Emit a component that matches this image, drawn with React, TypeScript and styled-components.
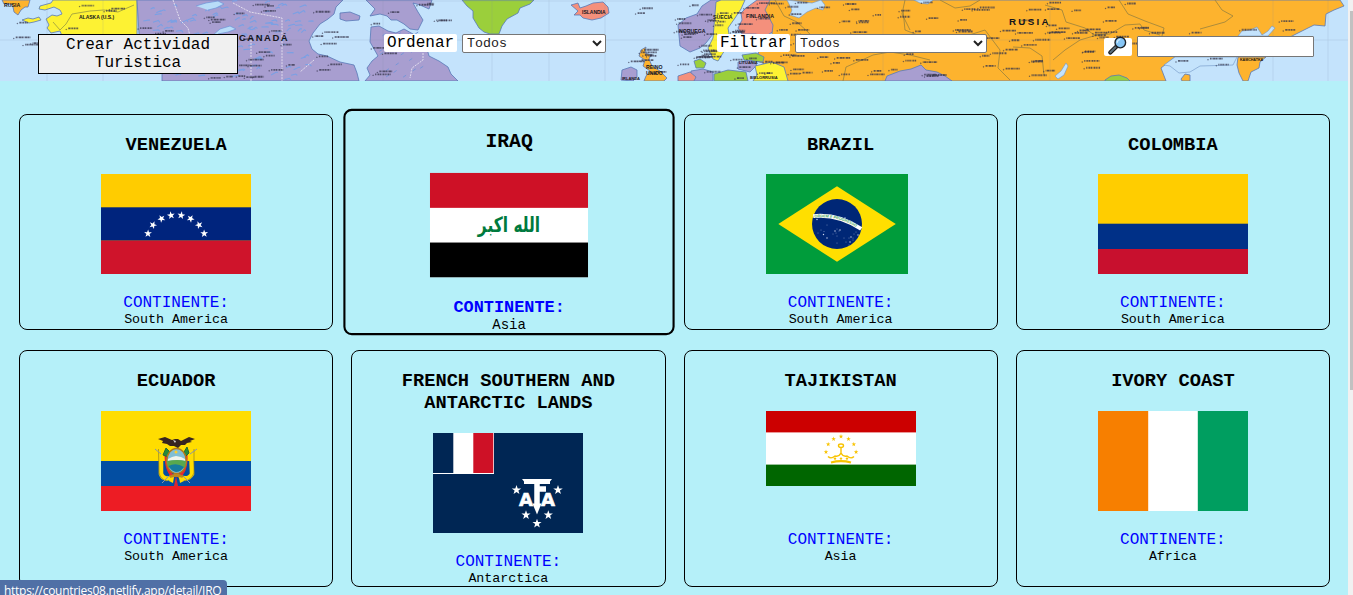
import React from 'react';
import styled, { createGlobalStyle, css } from 'styled-components';

const GlobalStyle = createGlobalStyle`
  *, *::before, *::after { box-sizing: border-box; }
  body {
    margin: 0;
    overflow: hidden;
    background: #b5f0f9;
    font-family: "Courier New", "Liberation Mono", monospace;
    color: #000;
  }
`;

const Page = styled.div`
  position: relative;
  display: flex;
  height: 595px;
  overflow: hidden;
`;

const Content = styled.main`
  width: 1348px;
  flex: none;
`;

const Header = styled.header`
  position: relative;
  height: 81px;
  overflow: hidden;
`;

const MapBackdrop = styled.svg`
  position: absolute;
  inset: 0;
  display: block;
`;

const Toolbar = styled.div`
  position: relative;
  display: flex;
  align-items: flex-start;
  padding: 34px 34px 0 38px;
`;

const CreateButton = styled.button`
  width: 200px;
  height: 40px;
  padding: 0;
  border: 1px solid #000;
  background: #f0f0f0;
  color: #000;
  font: 16px/18px "Liberation Mono", monospace;
  margin-right: 146px;
`;

const Field = styled.div<{ $after?: number; $top?: number }>`
  display: flex;
  align-items: flex-start;
  gap: 5px;
  margin-right: ${(p) => p.$after ?? 0}px;
  padding-top: ${(p) => p.$top ?? 0}px;
`;

const Tag = styled.label<{ $width: number; $top?: number }>`
  display: flex;
  justify-content: center;
  width: ${(p) => p.$width}px;
  height: 18px;
  margin-top: ${(p) => p.$top ?? 0}px;
  border-radius: 2px;
  background: #fff;
  font: 16px/19px "Liberation Mono", monospace;
`;

const Select = styled.select<{ $width: number }>`
  width: ${(p) => p.$width}px;
  height: 19px;
  border: 1px solid #767676;
  border-radius: 2px;
  background-color: #fff;
  color: #222;
  font: 13.333px "Liberation Mono", monospace;
`;

const SearchInput = styled.input`
  width: 177px;
  height: 21px;
  border: 1px solid #767676;
  border-radius: 1px;
  background: #fff;
`;

const Grid = styled.section`
  display: grid;
  grid-template-columns: repeat(4, 1fr);
  grid-template-rows: 216px 237px;
  gap: 20px 18px;
  padding: 33px 18px 0 19px;
`;

const Card = styled.article<{ $active?: boolean }>`
  display: flex;
  flex-direction: column;
  align-items: center;
  border: 1px solid #000;
  border-radius: 8px;
  &:nth-child(-n + 4) h3 { margin-bottom: 18px; }
  ${(p) =>
    p.$active &&
    css`
      border-width: 2px;
      transform: translateX(1px) scale(1.055, 1.048);
      &:nth-child(-n + 4) h3 { margin: 18px 0 18.5px; }
    `}
`;

const Name = styled.h3`
  width: 240px;
  margin: 19px 0;
  text-align: center;
  font-size: 18.72px;
  line-height: 22px;
  font-weight: 700;
`;

const FlagBox = styled.div`
  width: 150px;
  height: 100px;
  margin-bottom: 20px;
  svg { display: block; }
`;

const ContinentLabel = styled.span<{ $strong?: boolean }>`
  color: #00f;
  font-size: 16px;
  line-height: 18px;
  font-weight: ${(p) => (p.$strong ? 700 : 400)};
`;

const Continent = styled.span`
  font-size: 13.333px;
  line-height: 15px;
`;

const ScrollTrack = styled.div`
  width: 5px;
  height: 595px;
  padding: 11px 0 0 2px;
  background: #f1f1f1;
`;

const ScrollThumb = styled.div`
  height: 379px;
  background: #c1c1c1;
`;

const StatusBar = styled.div`
  position: absolute;
  left: 0;
  bottom: 0;
  width: 227px;
  height: 15px;
  padding-left: 4px;
  overflow: hidden;
  white-space: nowrap;
  border-top-right-radius: 4px;
  background: #5070a6;
  color: #fff;
  font: 12px/21px "Open Sans", sans-serif;
  letter-spacing: -0.28px;
`;

/* ---------- header map ---------- */

const random = (seed: number) => () => {
  seed = (seed * 16807) % 2147483647;
  return seed / 2147483647;
};

const INK = '#34344a';
const SEA = '#c4e3fc';
const ORANGE = '#fdb32e';
const PURPLE = '#a89ed0';
const YELLOW = '#fdf233';
const GREEN = '#9bcf3b';
const SALMON = '#f4907c';

const lands: [string, string][] = [
  [ORANGE, 'M2 0 4 4 11 4 13 7 14 12 18 15 21 10 25 7 28 7 30 0Z'],
  [YELLOW, 'M53 0 51 3 40 6 39 9 45 10 54 7 60 10 62 14 57 16 52 15 46 19 49 25 47 28 51 33 60 31 62 36 137 36 137 0Z'],
  [YELLOW, 'M22 20 28 18 33 19 39 17 41 20 34 22 29 23Z'],
  [PURPLE, 'M137 0H343L336 7 334 14 328 19 320 24 313 33 309 41 312 49 318 54 327 56 340 62 354 65 357 73 359 81H162V74L150 60 140 50Z'],
  [PURPLE, 'M340 13 350 12 360 16 359 20 346 21 340 19Z'],
  [PURPLE, 'M366 0 432 0 429 9 420 5 413 3 418 12 423 20 418 30 410 29 404 24 397 20 391 20 387 16 380 14 370 16 375 9Z'],
  [PURPLE, 'M371 27 379 26 388 31 396 33 404 29 413 34 426 45 429 56 439 61 448 67 451 74 458 81H365L370 75 367 68 372 61 378 56 374 49 370 42Z'],
  [GREEN, 'M462 0 467 6 473 11 473 18 479 28 484 32 490 34 499 34 502 26 507 19 518 13 520 8 530 4 534 0Z'],
  [SALMON, 'M571 5 578 3 580 8 586 6 593 3 603 2 608 7 609 13 601 18 592 20 583 18 580 15 574 15 578 11Z'],
  [ORANGE, 'M641 50 646 47 645 53 651 55 649 59 652 66 660 71 667 78 664 81H644L646 76 650 71 643 66 645 60 639 56Z'],
  [PURPLE, 'M622 70 631 67 637 70 637 77 633 81 621 80Z'],
  [PURPLE, 'M678 25 686 18 697 14 702 6 711 0H723L717 10 716 21 713 34 706 43 700 48 690 52 680 46Z'],
  [YELLOW, 'M716 2 721 0H745L741 9 735 18 728 28 729 34 732 40 723 53 718 61 713 59 708 48 713 38Z'],
  [SALMON, 'M741 13 746 8 757 0H773L775 18 774 31 766 36 755 34 742 34 738 28 742 20Z'],
  [ORANGE, 'M770 0H1340L1344 6 1334 10 1326 14 1325 26 1314 25 1302 31 1290 37H1164L1175 57 1161 68 1166 81H785L776 67 756 61 760 47 771 42 773 25 765 10Z'],
  [GREEN, 'M742 55 756 53 764 57 763 62 744 60Z'],
  [PURPLE, 'M738 62 751 60 757 65 750 72 738 69Z'],
  [YELLOW, 'M755 66 772 62 784 67 788 81H753L757 75Z'],
  [GREEN, 'M714 74 728 70 746 72 748 81H714Z'],
  [PURPLE, 'M691 71 703 69 713 72 713 81H690Z'],
  [GREEN, 'M694 61 700 59 706 63 704 68 696 68Z'],
  [SALMON, 'M678 76 690 72 696 77 694 81H678Z'],
  [PURPLE, 'M885 81 887 76 900 71 911 69 921 65 926 70 937 72 945 76 952 81Z'],
  [GREEN, 'M1105 80 1111 76 1119 75 1127 78 1130 81H1105Z'],
  [ORANGE, 'M1238 57H1266L1260 62 1259 68 1251 72 1248 81H1243L1239 73 1237 65Z'],
  [ORANGE, 'M1181 79 1185 74 1190 75 1190 81H1182Z'],
];

const waters = [
  'M787 0 792 10 790 15 799 18 807 12 816 8 823 10 825 5 821 0 812 3Z',
  'M1238 36 1242 31 1250 30 1257 27 1262 35 1268 31 1272 26 1275 28 1268 36Z',
  'M1055 76 1061 71 1066 63 1068 66 1064 75 1058 79Z',
  'M1164 65 1175 57H1237L1233 65 1200 66 1190 72 1179 73 1170 66Z',
  'M914 0H933L928 4 920 3Z',
];

const borders = [
  'M775 0 784 16 797 22 808 32 815 40',
  'M903 10 905 30 925 38 960 38 985 30 1000 50 998 68 1010 80',
  'M905 0 902 14 910 30',
  'M843 81 846 67 862 60 873 55 890 52 910 55 930 60',
  'M1045 5 1062 10 1066 22 1085 28 1094 35 1110 34 1125 25 1140 24 1144 30 1160 35',
  'M1119 0 1128 14 1145 21 1164 28 1162 36',
  'M1215 0 1222 10 1233 16 1225 22 1200 29',
  'M1053 60 1065 50 1080 40 1097 35',
  'M1013 47 1030 48 1042 56 1044 75',
  'M940 0 955 8 970 6 980 0',
];

const rng = random(71);
const inRange = (a: number, b: number) => a + rng() * (b - a);

const dashes = ['1.1 .6 .7 .5 1.4 .5', '2 .4 .8 .3 1.2 .6', '.8 .5 2.3 .4 .6 .3', '1.6 .4 .5 .6 2.6 .3'];

const townMarks = (count: number, x0: number, x1: number) =>
  Array.from({ length: count }, (_, i) => {
    const x = inRange(x0, x1);
    const y = inRange(2, 79);
    return { x, y, w: 6 + rng() * 10, dash: dashes[i % 4] };
  });

const towns = [
  ...townMarks(46, 140, 335),
  ...townMarks(14, 372, 440),
  ...townMarks(10, 0, 130),
  ...townMarks(26, 628, 712),
  ...townMarks(46, 700, 800),
  ...townMarks(90, 790, 1155),
  ...townMarks(9, 1170, 1290),
];

const lakes = Array.from({ length: 125 }, () => {
  const x = inRange(142, 310);
  const y = inRange(1, 80);
  return `M${x.toFixed(1)} ${y.toFixed(1)}l${(2 + rng() * 4).toFixed(1)} ${(-3 + rng() * 3).toFixed(1)}l1.5 ${(rng() * 2).toFixed(1)}`;
}).join('');

const northLakes = Array.from({ length: 30 }, () =>
  `M${inRange(376, 425).toFixed(1)} ${inRange(34, 79).toFixed(1)}l3 -2`
).join('');

const MapLabel = styled.text<{ $size: number; $spacing?: number }>`
  font: 700 ${(p) => p.$size}px "Liberation Sans", sans-serif;
  letter-spacing: ${(p) => p.$spacing ?? 0}px;
  fill: #15151c;
`;

const WorldMap = () => (
  <MapBackdrop width="1348" height="81" viewBox="0 0 1348 81" aria-hidden="true">
    <rect width="1348" height="81" fill={SEA} />
    {lands.map(([fill, d], i) => (
      <path key={i} d={d} fill={fill} stroke="#5878b8" strokeWidth="0.8" strokeLinejoin="round" />
    ))}
    {waters.map((d, i) => (
      <path key={i} d={d} fill={SEA} stroke="#6f94c4" strokeWidth="0.6" />
    ))}
    <path d={lakes} stroke="#7aa0e4" strokeWidth="1.1" fill="none" />
    <path d={northLakes} stroke="#7796d8" strokeWidth="1" fill="none" />
    <path d="M196 6 206 3 218 1 224 4 216 8 208 10M213 35 220 29 230 26 236 29 228 32 218 34" fill="#b8dcf8" stroke="#6c94d8" strokeWidth="0.7" />
    <path d="M173 0 180 20 188 28 190 36M233 3 250 12 282 18V81M251 40V81M314 60 300 72M423 44V60L412 68 410 78" fill="none" stroke="#f0ecf4" strokeWidth="0.8" strokeDasharray="2 1" />
    <path d="M53 22 60 30 66 24 72 14 90 11 104 10 118 12 134 5" fill="none" stroke="#777b45" strokeWidth="0.6" />
    {borders.map((d, i) => (
      <path key={i} d={d} fill="none" stroke="#98813e" strokeWidth="0.8" strokeLinejoin="round" />
    ))}
    <path d="M47 0V81M103 0V81M383 0V81M492 0V81M549 0V81M605 0V81M883 0V81M1050 0V81M1273 0V81M1328 0V81M0 40H1348M340 1H680" stroke="#7b8ca8" strokeWidth="0.4" opacity="0.4" />
    {towns.map((t, i) => (
      <g key={i} stroke={INK} opacity="0.75">
        <path d={`M${t.x} ${t.y}h${t.w}`} strokeWidth="1.8" strokeDasharray={t.dash} />
        <circle cx={t.x - 2} cy={t.y + 1} r="0.5" fill={INK} strokeWidth="0.3" />
      </g>
    ))}
    <MapLabel $size={5.2} x="4" y="7">RUSIA</MapLabel>
    <MapLabel $size={5} x="79" y="19">ALASKA (U.S.)</MapLabel>
    <MapLabel $size={9.5} $spacing={1.5} x="239" y="41">CANADÁ</MapLabel>
    <MapLabel $size={5} x="582" y="14">ISLANDIA</MapLabel>
    <MapLabel $size={5.2} x="713" y="19">SUECIA</MapLabel>
    <MapLabel $size={5.2} x="746" y="18">FINLANDIA</MapLabel>
    <MapLabel $size={5.2} x="679" y="33">NORUEGA</MapLabel>
    <MapLabel $size={5.2} x="646" y="69">REINO</MapLabel>
    <MapLabel $size={5.2} x="646" y="75">UNIDO</MapLabel>
    <MapLabel $size={4} x="622" y="80">IRLANDA</MapLabel>
    <MapLabel $size={4} x="739" y="64">LITUANIA</MapLabel>
    <MapLabel $size={4} x="750" y="79">BIELORRUSIA</MapLabel>
    <MapLabel $size={9.8} $spacing={2.3} x="1009" y="25">RUSIA</MapLabel>
    <MapLabel $size={3.6} x="1240" y="61">KAMCHATKA</MapLabel>
  </MapBackdrop>
);

const Magnifier = () => (
  <svg width="22" height="20" viewBox="0 0 22 20" aria-hidden="true">
    <path d="M4.3 16.6 11 10" stroke="#1a1a1a" strokeWidth="4.2" strokeLinecap="round" />
    <path d="M4.5 16.3 9.5 11.3" stroke="#5d6f7c" strokeWidth="2.2" strokeLinecap="round" />
    <circle cx="14.3" cy="6.6" r="5.3" fill="#86c5f5" stroke="#1d2228" strokeWidth="1.4" />
    <path d="M11.2 6.8c.1-1.9 1.4-3.2 3.1-3.3" fill="none" stroke="#d6eeff" strokeWidth="1.2" />
  </svg>
);

const LensTag = styled(Tag)`
  svg { flex: none; margin: -2px 2px 0 0; }
`;

/* ---------- flags ---------- */

const starPoints = (cx: number, cy: number, r: number, tilt = 0) =>
  Array.from({ length: 10 }, (_, i) => {
    const a = ((i * 36 - 90 + tilt) * Math.PI) / 180;
    const q = i % 2 ? r * 0.4 : r;
    return `${(cx + q * Math.cos(a)).toFixed(2)},${(cy + q * Math.sin(a)).toFixed(2)}`;
  }).join(' ');

const Star = ({ x, y, r, tilt, fill = '#fff' }: { x: number; y: number; r: number; tilt?: number; fill?: string }) => (
  <polygon points={starPoints(x, y, r, tilt)} fill={fill} />
);

const Flag = ({ w = 150, h = 100, children }: { w?: number; h?: number; children: React.ReactNode }) => (
  <svg width={w} height={h} viewBox={`0 0 ${w} ${h}`}>{children}</svg>
);

const Venezuela = () => (
  <Flag>
    <rect width="150" height="100" fill="#fc0" />
    <rect y="33.3" width="150" height="33.4" fill="#00247d" />
    <rect y="66.6" width="150" height="33.4" fill="#cf142b" />
    {[[47, 59.5, -70], [52, 51, -50], [60.5, 44.7, -30], [70, 41.4, -10], [80.2, 41.4, 10], [89.6, 44.7, 30], [98, 51, 50], [103.2, 59.5, 70]].map(([x, y, t]) => (
      <Star key={x} x={x} y={y} r={4.1} tilt={t} />
    ))}
  </Flag>
);

const ArabicScript = styled.text`
  font: 700 20px "DejaVu Sans", sans-serif;
  fill: #007a3d;
`;

const Iraq = () => (
  <Flag>
    <rect width="150" height="100" fill="#fff" />
    <rect width="150" height="33.5" fill="#ce1126" />
    <rect y="66.6" width="150" height="33.4" fill="#000" />
    <ArabicScript x="75" y="57" textAnchor="middle" textLength="59" lengthAdjust="spacingAndGlyphs">الله اكبر</ArabicScript>
  </Flag>
);

const Motto = styled.text`
  font: 700 3.8px "Liberation Sans", sans-serif;
  fill: #4aa864;
`;

const Brazil = () => (
  <Flag w={142}>
    <rect width="142" height="100" fill="#009c3b" />
    <path d="M12.3 50 71 12.2 129.8 50 71 87.8Z" fill="#ffdf00" />
    <circle cx="71" cy="50" r="25" fill="#002776" />
    <path d="M47.2 42.1Q72 39.5 95.2 54.8" fill="none" stroke="#fff" strokeWidth="3.9" />
    <path id="motto" d="M48.5 43.5Q72 41 95 56" fill="none" />
    <Motto><textPath href="#motto">ORDEM E PROGRESSO</textPath></Motto>
    {[[51, 45.5], [61, 51], [55, 56], [57.5, 60.5], [58, 57.5], [52, 59], [61, 64], [67, 60], [71, 55], [69, 57], [73, 57], [70, 59], [74, 56], [71, 62], [71, 69], [79, 44], [78, 64], [83, 64], [85, 63], [87, 66], [80, 68], [84, 68], [88, 60], [90, 58], [92, 61], [83, 71], [87, 64]].map(([x, y], i) => (
      <circle key={i} cx={x} cy={y} r={i % 3 ? 0.4 : 0.7} fill="#cfd9ef" />
    ))}
  </Flag>
);

const Colombia = () => (
  <Flag>
    <rect width="150" height="100" fill="#ffcd00" />
    <rect y="49.7" width="150" height="25.3" fill="#003087" />
    <rect y="75" width="150" height="25" fill="#c8102e" />
  </Flag>
);

const Ecuador = () => (
  <Flag>
    <rect width="150" height="100" fill="#fd0" />
    <rect y="50" width="150" height="25" fill="#034ea2" />
    <rect y="75" width="150" height="25" fill="#ed1c24" />
    <path d="M60 37 60 63Q63 70 71 66M90 37 91 63Q87 70 79 66" fill="none" stroke="#fd0" strokeWidth="4.5" />
    <path d="M57.5 38 58 62Q60 69 66 70M93 38 93 62Q90 69 84 70" fill="none" stroke="#80702a" strokeWidth="0.6" />
    <path d="M65 43Q65 61 73 66M85 43Q86 61 77 66" fill="none" stroke="#e52a2d" strokeWidth="3" />
    <path d="M54 38 60 43M96 38 89 43M61 72 68 65M89 72 82 65" stroke="#8996a7" strokeWidth="1" />
    <path d="M62 44 65 37 69 41 67 46ZM83 41 86 36 88 42 84 46Z" fill="#278b3b" stroke="#216a35" />
    <ellipse cx="75.5" cy="50" rx="9.8" ry="12.5" fill="#81bed5" stroke="#b67918" strokeWidth="1.4" />
    <path d="M67 48 71 46 75 45 80 46 84 48V50Q76 48 67 50Z" fill="#f0f3ed" />
    <path d="M66 50Q77 48 85 50L84 56Q76 60 67 56Z" fill="#58a84e" />
    <path d="M67.5 55Q75 51 83 56Q80 61 75 61Q70 60 67.5 55Z" fill="#167b9e" />
    <circle cx="75" cy="41" r="1.5" fill="#ffcd29" />
    <path d="M57 28 64 26 71 29 74 28 77 28 80 30 88 26 94 28 89 30 91 31 86 32 84 34 80 34 77 37 73 35 69 35 66 33 61 32 62 30Z" fill="#38251f" />
    <path d="M72 29 75 30 74 32Z" fill="#ddd" />
    <path d="M68 65 73 63 78 63 83 65 80 68 77 66 73 66 70 68Z" fill="#bd891f" />
    <path d="M69 67 73 66 72 72 68 70ZM78 66 82 67 83 70 79 72Z" fill="#fd0" />
    <path d="M75 65 77 75H73Z" fill="#d62a30" />
  </Flag>
);

const Monogram = styled.text`
  font: 700 17px "DejaVu Sans", sans-serif;
  fill: #fff;
  stroke: #fff;
  stroke-width: 0.6px;
`;

/* Territory emblem: a crossbar over an anchor-like shaft, flanked by two letters. */
const TerritoryEmblem = () => (
  <g>
    <path d="M91 48.5H117" stroke="#fff" strokeWidth="5" />
    <path d="M89 46H93V51ZM119 46H115V51Z" fill="#fff" />
    <path d="M104 48V73M106 56H113" stroke="#fff" strokeWidth="5.5" fill="none" strokeWidth-linecap="butt" />
    <path d="M99.5 70.5H108.5L104 81.5Z" fill="#fff" />
    <Monogram x="86" y="73" textLength="14" lengthAdjust="spacingAndGlyphs">A</Monogram>
    <Monogram x="108" y="73" textLength="14" lengthAdjust="spacingAndGlyphs">A</Monogram>
  </g>
);

const FrenchSouthern = () => (
  <Flag>
    <rect width="150" height="100" fill="#002654" />
    <rect width="61" height="41" fill="#fff" />
    <rect width="20.3" height="40" fill="#002654" />
    <rect x="40.3" width="20" height="40" fill="#ce1126" />
    <TerritoryEmblem />
    <Star x={83.5} y={57} r={5} />
    <Star x={125} y={57} r={5} />
    <Star x={93} y={82} r={4.8} />
    <Star x={115.3} y={82} r={4.8} />
    <Star x={104} y={90.5} r={4.8} />
  </Flag>
);

const Tajikistan = () => (
  <Flag h={75}>
    <rect width="150" height="75" fill="#fff" />
    <rect width="150" height="21.4" fill="#c00" />
    <rect y="53.6" width="150" height="21.4" fill="#060" />
    {[[60, 41], [62.2, 33.3], [67.6, 28], [75, 25.5], [82.5, 28], [87.8, 33.3], [90.1, 41]].map(([x, y]) => (
      <Star key={x} x={x} y={y} r={2.4} fill="#f8c300" />
    ))}
    <g fill="none" stroke="#f8c300" strokeWidth="1.4">
      <ellipse cx="75" cy="34.7" rx="2.5" ry="1.7" />
      <path d="M75 37V43M62 45.5Q65 48.5 69 45Q73 46 75 42Q77 46 81 45Q85 48.5 88 45.5" />
      <path d="M65 51.5Q75 48.8 85 51.5" strokeWidth="2.2" />
    </g>
    {[69, 75, 81].map((x) => <circle key={x} cx={x} cy="47.6" r="1.2" fill="#f8c300" />)}
  </Flag>
);

const IvoryCoast = () => (
  <Flag>
    <rect width="150" height="100" fill="#fff" />
    <rect width="50.2" height="100" fill="#f77f00" />
    <rect x="99.8" width="50.2" height="100" fill="#009e60" />
  </Flag>
);

const countries = [
  { name: 'VENEZUELA', continent: 'South America', Image: Venezuela },
  { name: 'IRAQ', continent: 'Asia', Image: Iraq, active: true },
  { name: 'BRAZIL', continent: 'South America', Image: Brazil },
  { name: 'COLOMBIA', continent: 'South America', Image: Colombia },
  { name: 'ECUADOR', continent: 'South America', Image: Ecuador },
  { name: 'FRENCH SOUTHERN AND ANTARCTIC LANDS', continent: 'Antarctica', Image: FrenchSouthern },
  { name: 'TAJIKISTAN', continent: 'Asia', Image: Tajikistan },
  { name: 'IVORY COAST', continent: 'Africa', Image: IvoryCoast },
];

export default function App() {
  return (
    <Page>
      <GlobalStyle />
      <Content>
        <Header>
          <WorldMap />
          <Toolbar>
            <CreateButton>Crear Actividad<br />Turistica</CreateButton>
            <Field $after={111}>
              <Tag $width={73}>Ordenar</Tag>
              <Select $width={144}><option>Todos</option></Select>
            </Field>
            <Field $after={117}>
              <Tag $width={73}>Filtrar</Tag>
              <Select $width={192}><option>Todos</option></Select>
            </Field>
            <Field $top={2}>
              <LensTag $width={28} $top={2}><Magnifier /></LensTag>
              <SearchInput />
            </Field>
          </Toolbar>
        </Header>
        <Grid>
          {countries.map(({ name, continent, Image, active }) => (
            <Card key={name} $active={active}>
              <Name>{name}</Name>
              <FlagBox><Image /></FlagBox>
              <ContinentLabel $strong={active}>CONTINENTE:</ContinentLabel>
              <Continent>{continent}</Continent>
            </Card>
          ))}
        </Grid>
      </Content>
      <ScrollTrack><ScrollThumb /></ScrollTrack>
      <StatusBar>https://countries08.netlify.app/detail/IRQ</StatusBar>
    </Page>
  );
}
